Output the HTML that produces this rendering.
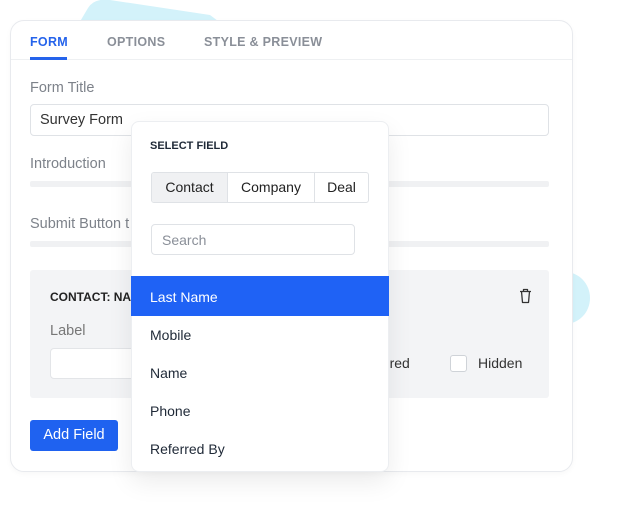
<!DOCTYPE html>
<html><head><style>
*{box-sizing:border-box;margin:0;padding:0}
body{width:620px;height:529px;background:#fff;font-family:"Liberation Sans",sans-serif;position:relative;overflow:hidden}
.abs{position:absolute}
.card{left:10px;top:20px;width:563px;height:452px;background:#fff;border:1px solid #e8eaee;border-radius:14px;box-shadow:0 2px 6px rgba(0,0,0,.03)}
.tab{top:35px;font-size:12.5px;font-weight:bold;letter-spacing:.3px;color:#8a8f98}
.lbl{font-size:14.5px;color:#7d828a}
.bar{height:6px;background:#f0f1f3;border-radius:2px}
.dd{left:131px;top:121px;width:258px;height:351px;background:#fff;border:1px solid #eceef1;border-radius:8px;box-shadow:0 10px 25px rgba(0,0,0,.08)}
.item{left:150px;font-size:14px;color:#1f2937}
</style></head><body>
<svg class="abs" style="left:0;top:0" width="620" height="40"><path d="M75 30 L88 8 Q94 -2 110 0 L210 15 L230 30 Z" fill="#d3f2fa"/></svg>
<div class="abs" style="left:540px;top:272px;width:50px;height:52px;background:#d3f2fa;border-radius:50%"></div>
<div class="abs card"></div>
<div class="abs" style="left:11px;top:59px;width:561px;height:1px;background:#eef0f2"></div>
<div class="abs tab" style="left:30px;color:#2563eb">FORM</div>
<div class="abs" style="left:30px;top:57px;width:37px;height:3px;background:#2563eb"></div>
<div class="abs tab" style="left:107px">OPTIONS</div>
<div class="abs tab" style="left:204px">STYLE &amp; PREVIEW</div>
<div class="abs lbl" style="left:30px;top:80px">Form Title</div>
<div class="abs" style="left:30px;top:104px;width:519px;height:32px;border:1px solid #dfe2e6;border-radius:4px;font-size:14.5px;color:#333;padding:7px 9px">Survey Form</div>
<div class="abs lbl" style="left:30px;top:156px">Introduction</div>
<div class="abs bar" style="left:30px;top:181px;width:519px"></div>
<div class="abs lbl" style="left:30px;top:216px">Submit Button t</div>
<div class="abs bar" style="left:30px;top:241px;width:519px"></div>
<div class="abs" style="left:30px;top:270px;width:519px;height:128px;background:#f3f4f6;border-radius:3px"></div>
<div class="abs" style="left:50px;top:290px;font-size:12px;font-weight:bold;color:#222">CONTACT: NA</div>
<div class="abs lbl" style="left:50px;top:323px;color:#777">Label</div>
<div class="abs" style="left:50px;top:348px;width:100px;height:31px;background:#fff;border:1px solid #e3e5e8;border-radius:4px"></div>
<div class="abs" style="left:353px;top:355px;font-size:14px;color:#333">Required</div>
<div class="abs" style="left:450px;top:355px;width:17px;height:17px;background:#fff;border:1px solid #cfd3d8;border-radius:3px"></div>
<div class="abs" style="left:478px;top:355px;font-size:14px;color:#333">Hidden</div>
<svg class="abs" style="left:519px;top:288px" width="13" height="16" viewBox="0 0 13 16"><path d="M1 3.5h11M4.5 3.5V1.5h4v2M2.5 3.5l1 11h6l1-11" fill="none" stroke="#333" stroke-width="1.3" stroke-linejoin="round"/></svg>
<div class="abs" style="left:30px;top:420px;width:88px;height:31px;background:#1f62f0;border-radius:3px;color:#fff;font-size:14.5px;text-align:center;line-height:31px">Add Field</div>
<div class="abs dd"></div>
<div class="abs" style="left:150px;top:140px;font-size:11px;font-weight:bold;color:#1f2937">SELECT FIELD</div>
<div class="abs" style="left:151px;top:172px;width:218px;height:31px;border:1px solid #dfe2e6;border-radius:3px;overflow:hidden;font-size:14px;color:#222;display:flex">
<div style="width:76px;background:#f0f1f3;border-right:1px solid #dfe2e6;text-align:center;line-height:29px">Contact</div>
<div style="width:87px;border-right:1px solid #dfe2e6;text-align:center;line-height:29px">Company</div>
<div style="flex:1;text-align:center;line-height:29px">Deal</div></div>
<div class="abs" style="left:151px;top:224px;width:204px;height:31px;border:1px solid #dfe2e6;border-radius:4px;font-size:14px;color:#8a8f98;padding:7px 10px">Search</div>
<div class="abs" style="left:131px;top:276px;width:258px;height:40px;background:#1f62f5"></div>
<div class="abs item" style="top:289px;color:#fff">Last Name</div>
<div class="abs item" style="top:327px">Mobile</div>
<div class="abs item" style="top:365px">Name</div>
<div class="abs item" style="top:403px">Phone</div>
<div class="abs item" style="top:441px">Referred By</div>
</body></html>
